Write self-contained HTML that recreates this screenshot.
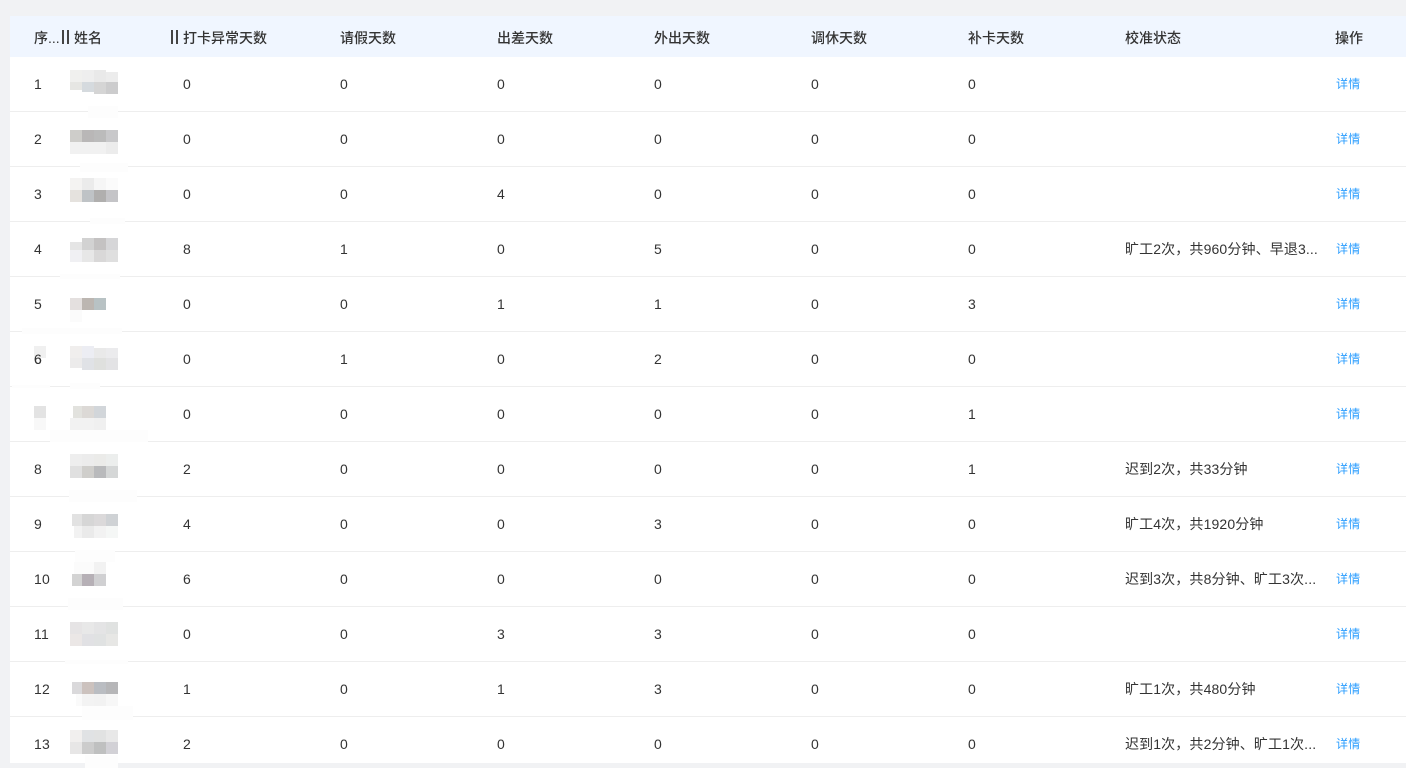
<!DOCTYPE html>
<html lang="zh-CN">
<head>
<meta charset="utf-8">
<title>考勤统计</title>
<style>
html,body{margin:0;padding:0;width:1406px;height:768px;overflow:hidden;background:#f1f2f4}
body{position:relative;font-family:"Liberation Sans","Noto Sans CJK SC",sans-serif;font-size:14px;color:#333}
#t{position:absolute;left:10px;top:16px;width:1396px;height:747px;background:#fff;overflow:hidden}
.h{position:absolute;left:10px;top:16px;width:1396px;height:41px;background:#f0f6ff}
.r{position:absolute;left:10px;width:1396px;height:54px;border-bottom:1px solid #eee}
.c{position:absolute;white-space:nowrap;line-height:20px;top:17px;letter-spacing:.2px}
.a{left:24px}.b{left:173px}.d{left:330px}.e{left:487px}.f{left:644px}.g{left:801px}.i{left:958px}.j{left:1115px;letter-spacing:.13px}
.k{left:1326px;font-size:12px;color:#2a9dff;letter-spacing:.3px}
.th{position:absolute;top:28px;line-height:20px;white-space:nowrap;font-weight:500;color:#333;font-size:14px}
.bar{position:absolute;top:30px;width:2px;height:14px;background:#444}
svg{position:absolute;left:0;top:0}
</style>
</head>
<body>
<div id="t"></div>
<div class="h"></div>
<div class="th" style="left:34px">序...</div>
<div class="bar" style="left:62px"></div><div class="bar" style="left:67px"></div>
<div class="th" style="left:74px">姓名</div>
<div class="bar" style="left:171px"></div><div class="bar" style="left:176px"></div>
<div class="th" style="left:183px">打卡异常天数</div>
<div class="th" style="left:340px">请假天数</div>
<div class="th" style="left:497px">出差天数</div>
<div class="th" style="left:654px">外出天数</div>
<div class="th" style="left:811px">调休天数</div>
<div class="th" style="left:968px">补卡天数</div>
<div class="th" style="left:1125px">校准状态</div>
<div class="th" style="left:1335px">操作</div>

<div class="r" style="top:57px"><span class="c a">1</span><span class="c b">0</span><span class="c d">0</span><span class="c e">0</span><span class="c f">0</span><span class="c g">0</span><span class="c i">0</span><span class="c k">详情</span></div>
<div class="r" style="top:112px"><span class="c a">2</span><span class="c b">0</span><span class="c d">0</span><span class="c e">0</span><span class="c f">0</span><span class="c g">0</span><span class="c i">0</span><span class="c k">详情</span></div>
<div class="r" style="top:167px"><span class="c a">3</span><span class="c b">0</span><span class="c d">0</span><span class="c e">4</span><span class="c f">0</span><span class="c g">0</span><span class="c i">0</span><span class="c k">详情</span></div>
<div class="r" style="top:222px"><span class="c a">4</span><span class="c b">8</span><span class="c d">1</span><span class="c e">0</span><span class="c f">5</span><span class="c g">0</span><span class="c i">0</span><span class="c j">旷工2次，共960分钟、早退3...</span><span class="c k">详情</span></div>
<div class="r" style="top:277px"><span class="c a">5</span><span class="c b">0</span><span class="c d">0</span><span class="c e">1</span><span class="c f">1</span><span class="c g">0</span><span class="c i">3</span><span class="c k">详情</span></div>
<div class="r" style="top:332px"><span class="c a">6</span><span class="c b">0</span><span class="c d">1</span><span class="c e">0</span><span class="c f">2</span><span class="c g">0</span><span class="c i">0</span><span class="c k">详情</span></div>
<div class="r" style="top:387px"><span class="c b">0</span><span class="c d">0</span><span class="c e">0</span><span class="c f">0</span><span class="c g">0</span><span class="c i">1</span><span class="c k">详情</span></div>
<div class="r" style="top:442px"><span class="c a">8</span><span class="c b">2</span><span class="c d">0</span><span class="c e">0</span><span class="c f">0</span><span class="c g">0</span><span class="c i">1</span><span class="c j">迟到2次，共33分钟</span><span class="c k">详情</span></div>
<div class="r" style="top:497px"><span class="c a">9</span><span class="c b">4</span><span class="c d">0</span><span class="c e">0</span><span class="c f">3</span><span class="c g">0</span><span class="c i">0</span><span class="c j">旷工4次，共1920分钟</span><span class="c k">详情</span></div>
<div class="r" style="top:552px"><span class="c a">10</span><span class="c b">6</span><span class="c d">0</span><span class="c e">0</span><span class="c f">0</span><span class="c g">0</span><span class="c i">0</span><span class="c j">迟到3次，共8分钟、旷工3次...</span><span class="c k">详情</span></div>
<div class="r" style="top:607px"><span class="c a">11</span><span class="c b">0</span><span class="c d">0</span><span class="c e">3</span><span class="c f">3</span><span class="c g">0</span><span class="c i">0</span><span class="c k">详情</span></div>
<div class="r" style="top:662px"><span class="c a">12</span><span class="c b">1</span><span class="c d">0</span><span class="c e">1</span><span class="c f">3</span><span class="c g">0</span><span class="c i">0</span><span class="c j">旷工1次，共480分钟</span><span class="c k">详情</span></div>
<div class="r" style="top:717px;height:46px;border:0"><span class="c a">13</span><span class="c b">2</span><span class="c d">0</span><span class="c e">0</span><span class="c f">0</span><span class="c g">0</span><span class="c i">0</span><span class="c j">迟到1次，共2分钟、旷工1次...</span><span class="c k">详情</span></div>

<svg width="1406" height="768" viewBox="0 0 1406 768" shape-rendering="crispEdges">
  <!-- smudges covering row lines -->
  <g fill="#fdfdfd">
    <rect x="88" y="106" width="30" height="12"/>
    <rect x="80" y="163" width="48" height="9"/>
    <rect x="90" y="218" width="35" height="6"/>
    <rect x="60" y="274" width="60" height="5"/>
    <rect x="22" y="328" width="100" height="6"/>
    <rect x="12" y="385" width="38" height="3"/>
    <rect x="70" y="383" width="30" height="6"/>
    <rect x="50" y="430" width="98" height="12"/>
    <rect x="69" y="490" width="68" height="12"/>
    <rect x="75" y="550" width="40" height="12"/>
    <rect x="68" y="598" width="55" height="12"/>
    <rect x="65" y="660" width="63" height="4"/>
    <rect x="82" y="706" width="51" height="14"/>
    <rect x="85" y="755" width="33" height="13"/>
  </g>
  <g transform="translate(70,70)"><rect width="12" height="12" fill="#f0f0ee"/><rect x="12" width="12" height="12" fill="#eee"/><rect x="24" width="12" height="12" fill="#e9e9e9"/><rect x="36" y="2" width="12" height="10" fill="#ececec"/><rect y="12" width="12" height="8" fill="#e6e6e3"/><rect x="12" y="12" width="12" height="10" fill="#d5dade"/><rect x="24" y="12" width="12" height="12" fill="#d5d5d5"/><rect x="36" y="12" width="12" height="12" fill="#cccccd"/></g>
  <g transform="translate(70,130)"><rect width="12" height="12" fill="#cecdca"/><rect x="12" width="12" height="12" fill="#b9b7b7"/><rect x="24" width="12" height="12" fill="#bbb"/><rect x="36" width="12" height="12" fill="#c8c8ca"/><rect y="12" width="12" height="12" fill="#f1f1f1"/><rect x="12" y="12" width="12" height="12" fill="#f1f1f1"/><rect x="24" y="12" width="12" height="12" fill="#f1f1f1"/><rect x="36" y="12" width="12" height="12" fill="#ececec"/></g>
  <g transform="translate(70,178)"><rect width="12" height="12" fill="#f4f3f2"/><rect x="12" width="12" height="12" fill="#ebebeb"/><rect x="24" width="12" height="12" fill="#f6f6f6"/><rect x="36" width="12" height="12" fill="#fbfbfb"/><rect y="12" width="12" height="12" fill="#e5e2de"/><rect x="12" y="12" width="12" height="12" fill="#bfc3c6"/><rect x="24" y="12" width="12" height="12" fill="#b0afae"/><rect x="36" y="12" width="12" height="12" fill="#c4c4c7"/></g>
  <g transform="translate(70,238)"><rect y="4" width="12" height="8" fill="#e5e5e5"/><rect x="12" width="12" height="12" fill="#d2d2d2"/><rect x="24" width="12" height="12" fill="#c4c2c2"/><rect x="36" width="12" height="12" fill="#d6d6d8"/><rect y="12" width="12" height="12" fill="#f0f0f3"/><rect x="12" y="12" width="12" height="12" fill="#e7e7e7"/><rect x="24" y="12" width="12" height="12" fill="#d9d8d8"/><rect x="36" y="12" width="12" height="12" fill="#dfdfdf"/></g>
  <g transform="translate(70,298)"><rect width="12" height="12" fill="#e4e0df"/><rect x="12" width="12" height="12" fill="#bcb6b1"/><rect x="24" width="12" height="12" fill="#b8c2c4"/></g>
  <rect x="70" y="310" width="12" height="12" fill="#fbfbfb"/>
  <rect x="34" y="346" width="12" height="12" fill="#f0f0f0"/>
  <text x="34" y="364" font-size="14" fill="#333" font-family="Liberation Sans" shape-rendering="auto">6</text>
  <g transform="translate(70,346)"><rect width="12" height="12" fill="#f0eeed"/><rect x="12" width="12" height="12" fill="#ecedf3"/><rect x="24" y="2" width="12" height="10" fill="#e9e9e9"/><rect x="36" y="2" width="12" height="10" fill="#ebebed"/><rect y="12" width="12" height="10" fill="#ecebeb"/><rect x="12" y="12" width="12" height="12" fill="#e0e2e6"/><rect x="24" y="12" width="12" height="12" fill="#dfe0de"/><rect x="36" y="12" width="12" height="12" fill="#e3e3e5"/></g>
  <rect x="34" y="406" width="12" height="12" fill="#e3e3e3"/>
  <rect x="34" y="418" width="12" height="12" fill="#f8f8f8"/>
  <g transform="translate(70,406)"><rect x="3" width="9" height="12" fill="#e2e2de"/><rect x="12" width="12" height="12" fill="#dcd9d6"/><rect x="24" width="12" height="12" fill="#d2d6da"/><rect y="12" width="12" height="12" fill="#f2f2f2"/><rect x="12" y="12" width="12" height="12" fill="#f2f2f2"/><rect x="24" y="12" width="12" height="12" fill="#f0f0f0"/></g>
  <g transform="translate(70,454)"><rect width="12" height="12" fill="#eee"/><rect x="12" width="12" height="12" fill="#ececec"/><rect x="24" width="12" height="12" fill="#ebebe9"/><rect x="36" width="12" height="12" fill="#eceeed"/><rect y="12" width="12" height="12" fill="#e0e0e0"/><rect x="12" y="12" width="12" height="12" fill="#cfcecb"/><rect x="24" y="12" width="12" height="12" fill="#b9babc"/><rect x="36" y="12" width="12" height="12" fill="#d5d7d7"/></g>
  <g transform="translate(70,514)"><rect x="2" width="10" height="12" fill="#e2e2e2"/><rect x="12" width="12" height="12" fill="#d6d6d6"/><rect x="24" width="12" height="12" fill="#dbd9da"/><rect x="36" width="12" height="12" fill="#cfd2d5"/><rect x="4" y="12" width="8" height="12" fill="#f2f2f2"/><rect x="12" y="12" width="12" height="12" fill="#eaeaea"/><rect x="24" y="12" width="12" height="12" fill="#f2f2f2"/><rect x="36" y="12" width="12" height="12" fill="#f5f7f6"/></g>
  <g transform="translate(70,562)"><rect x="4" width="8" height="12" fill="#fbfbfb"/><rect x="12" width="12" height="12" fill="#fbfbfb"/><rect x="24" width="12" height="12" fill="#f2f2f2"/><rect x="2" y="12" width="10" height="12" fill="#d3d3d3"/><rect x="12" y="12" width="12" height="12" fill="#b6b0b6"/><rect x="24" y="12" width="12" height="12" fill="#d0d0d2"/></g>
  <g transform="translate(70,622)"><rect width="12" height="12" fill="#e6e4e5"/><rect x="12" width="12" height="12" fill="#e8e8e8"/><rect x="24" width="12" height="12" fill="#e4e4e5"/><rect x="36" width="12" height="12" fill="#e0e2e1"/><rect y="12" width="12" height="12" fill="#ebe7e6"/><rect x="12" y="12" width="12" height="12" fill="#e1e1e4"/><rect x="24" y="12" width="12" height="12" fill="#e0e2e2"/><rect x="36" y="12" width="12" height="12" fill="#e7e7e5"/></g>
  <g transform="translate(70,682)"><rect x="2" width="10" height="12" fill="#dad9db"/><rect x="12" width="12" height="12" fill="#ccc2be"/><rect x="24" width="12" height="12" fill="#babdc2"/><rect x="36" width="12" height="12" fill="#b6b6b8"/><rect x="6" y="12" width="6" height="12" fill="#fafafa"/><rect x="12" y="12" width="12" height="12" fill="#f3f3f3"/><rect x="24" y="12" width="12" height="12" fill="#f2f2f2"/><rect x="36" y="12" width="12" height="12" fill="#f7f7f7"/></g>
  <g transform="translate(70,730)"><rect width="12" height="12" fill="#f1efee"/><rect x="12" width="12" height="12" fill="#e0e2e4"/><rect x="24" width="12" height="12" fill="#e1e2e2"/><rect x="36" width="12" height="12" fill="#e8e8e8"/><rect y="12" width="12" height="12" fill="#e7e6e6"/><rect x="12" y="12" width="12" height="12" fill="#ccc"/><rect x="24" y="12" width="12" height="12" fill="#bfc0c0"/><rect x="36" y="12" width="12" height="12" fill="#d2d1d6"/></g>
</svg>
</body>
</html>
